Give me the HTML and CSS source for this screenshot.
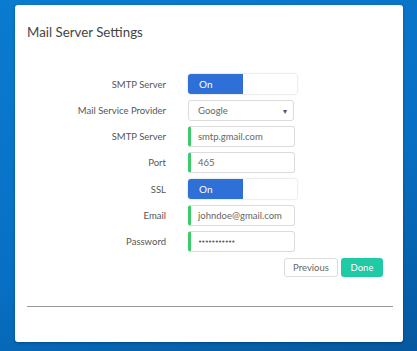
FILE: index.html
```html
<!DOCTYPE html>
<html lang="en">
<head>
  <meta charset="UTF-8" />
  <title>Mail Server Settings</title>
  <link rel="stylesheet" href="styles.css">
</head>
<body>
  <div class="card">
    <h1>Mail Server Settings</h1>
    <form class="settings">
      <label>SMTP Server</label>
      <div class="toggle"><span class="on">On</span><span class="off"></span></div>

      <label>Mail Service Provider</label>
      <div class="select"><span>Google</span><span class="caret">&#9662;</span></div>

      <label>SMTP Server</label>
      <input type="text" value="smtp.gmail.com">

      <label>Port</label>
      <input type="text" value="465">

      <label>SSL</label>
      <div class="toggle"><span class="on">On</span><span class="off"></span></div>

      <label>Email</label>
      <input type="text" value="johndoe@gmail.com">

      <label>Password</label>
      <input type="password" value="12345678901">
    </form>
    <div class="actions">
      <button type="button" class="prev">Previous</button>
      <button type="button" class="done">Done</button>
    </div>
    <hr>
  </div>
</body>
</html>
```

FILE: styles.css
```css
body {
  margin: 0;
  height: 351px;
  overflow: hidden;
  font-family: Lato, "Noto Sans", sans-serif;
  background: linear-gradient(160deg, #0a7bd0 0%, #0870c4 55%, #05589e 100%);
  padding: 5px 14px 0 15px;
}

.card {
  background: #fff;
  border-radius: 3px;
  width: 388px;
  height: 337px;
  box-sizing: border-box;
  padding: 19px 10px 0 12px;
  box-shadow: 0 1px 3px rgba(0, 0, 0, 0.3);
}

h1 {
  margin: 0 0 33px;
  font-size: 13.3px;
  font-weight: 400;
  color: #444;
}

.settings {
  display: grid;
  grid-template-columns: 139px 107px;
  column-gap: 22px;
  row-gap: 5px;
  align-items: center;
}

label {
  text-align: right;
  font-size: 9.5px;
  color: #555;
}

.toggle {
  display: flex;
  height: 20px;
  width: 109px;
  border-radius: 3px;
  box-shadow: 0 0 2px rgba(0, 0, 0, 0.25);
  overflow: hidden;
  margin: 1px 0;
}

.toggle .on {
  width: 55px;
  background: #2f6fd8;
  color: #fff;
  font-size: 10px;
  line-height: 20px;
  padding-left: 11px;
  box-sizing: border-box;
}

.toggle .off {
  flex: 1;
  background: #fff;
}

.select,
input {
  height: 21px;
  box-sizing: border-box;
  border: 1px solid #dcdcdc;
  border-radius: 3px;
  font-family: inherit;
  font-size: 9.5px;
  color: #666;
  background: #fff;
}

.select {
  display: flex;
  justify-content: space-between;
  align-items: center;
  padding: 0 6px 0 9px;
  width: 106px;
}

.select .caret {
  font-size: 8px;
  color: #555;
}

input {
  width: 107px;
  padding: 0 0 0 7px;
  border-left: 3px solid #3ccb6b;
  margin: 0;
  outline: none;
}

input[type="password"] {
  font-family: "DejaVu Sans", sans-serif;
  letter-spacing: -0.8px;
  font-size: 7px;
  color: #555;
}

.actions {
  display: flex;
  justify-content: flex-end;
  gap: 3px;
  margin: 6px 10px 0 0;
}

button {
  height: 19px;
  font-family: inherit;
  font-size: 9.5px;
  border-radius: 3px;
  padding: 0;
  cursor: pointer;
}

.prev {
  width: 54px;
  background: #fff;
  border: 1px solid #ddd;
  color: #666;
}

.done {
  width: 42px;
  background: #1fcaa5;
  border: none;
  color: #fff;
}

hr {
  margin: 29px 0 0;
  border: none;
  border-top: 1px solid #9a9a9a;
}
```
